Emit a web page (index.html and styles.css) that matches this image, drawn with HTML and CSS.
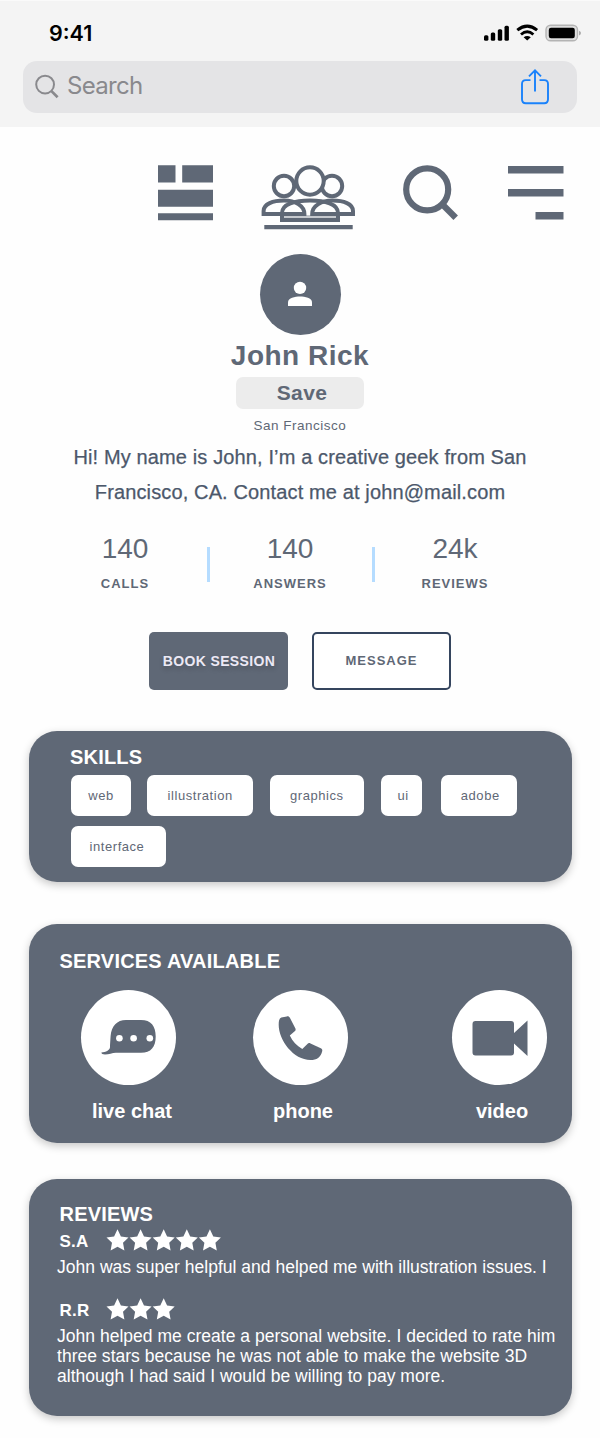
FILE: index.html
```html
<!DOCTYPE html>
<html lang="en">
<head>
<meta charset="utf-8">
<title>John Rick</title>
<link rel="stylesheet" href="styles.css">
</head>
<body>
<svg class="defs" width="0" height="0"><defs>
  <path id="star" d="M11.5 0.3 L14.9 7.4 L22.5 8.4 L17 13.7 L18.4 21.4 L11.5 17.7 L4.6 21.4 L6 13.7 L0.5 8.4 L8.1 7.4 Z"/>
</defs></svg>
<header class="top">
  <div class="status">
    <span class="time">9:41</span>
    <svg class="signals" width="98" height="20" viewBox="0 0 98 20">
      <rect x="1" y="12.2" width="4.4" height="5.6" rx="1.5"/><rect x="7.8" y="9.5" width="4.4" height="8.3" rx="1.5"/><rect x="14.8" y="6.2" width="4.4" height="11.6" rx="1.5"/><rect x="21.5" y="2.7" width="4.4" height="15.1" rx="1.5"/>
      <g fill="none" stroke="#000"><path d="M34.3 7.2 Q44.2 -1 54.1 7.2" stroke-width="3"/><path d="M38 11.5 Q44.2 6.2 50.4 11.5" stroke-width="2.9"/></g>
      <path d="M40.6 14.2 Q44.2 11.6 47.8 14.2 L44.2 17.6Z"/>
      <rect x="63" y="2.2" width="31.5" height="15.6" rx="4.6" fill="#dedede" stroke="#b4b4b4" stroke-width="1.4"/>
      <rect x="65.8" y="4.8" width="26" height="10.4" rx="2.2"/>
      <path d="M96 7.7 Q98 8.5 98 10.1 Q98 11.7 96 12.4Z" fill="#aaa"/>
    </svg>
  </div>
  <div class="search">
    <svg width="25" height="26" viewBox="0 0 25 26" fill="none" stroke="#89898d"><circle cx="10.1" cy="10.6" r="8.9" stroke-width="2"/><path d="M16.5 17.1 L22.6 23.2" stroke-width="2.7"/></svg>
    <span class="placeholder">Search</span>
    <svg class="share" width="30" height="38" viewBox="0 0 30 38" fill="none" stroke="#1a82fb" stroke-width="1.9"><path d="M10.5 12.1H5.8Q2 12.1 2 15.9V31.2Q2 35.2 5.8 35.2H24.2Q28 35.2 28 31.2V15.9Q28 12.1 24.2 12.1H19.5"/><path d="M15 23.5V2.5M9 8.4L15 2.4L21 8.4"/></svg>
  </div>
</header>

<nav class="nav">
  <svg width="56" height="56" viewBox="0 0 56 56"><path d="M0 .3H17.5V17.5H0ZM24.2 .3H55V17.5H24.2ZM0 24.8H55V41.7H0ZM0 48.3H55V55.2H0Z"/></svg>
  <svg class="people" width="95" height="66" viewBox="0 0 95 66">
    <path d="M21 50H77V55H21Z" opacity=".35"/>
    <g fill="none" stroke="#5f6876" stroke-width="4">
      <circle cx="23" cy="21" r="10.2"/><circle cx="71" cy="21" r="10.2"/>
      <circle cx="49" cy="16" r="13.7" fill="#fefefe"/>
      <path d="M2.6 49V46C2.6 39 12 35.6 23 35.6C34 35.6 43.4 40.5 43.4 49Z"/>
      <path d="M91.4 49V46C91.4 39 82 35.6 71 35.6C60 35.6 50.6 40.5 50.6 49Z" transform="translate(.6)"/>
      <path d="M21 55V48C21 39 34 35.4 49 35.4S77 39 77 48V55Z"/>
    </g>
    <path d="M3.3 60H91.7V64.2H3.3Z"/>
  </svg>
  <svg class="lens" width="56" height="56" viewBox="0 0 56 56" fill="none" stroke="#5f6876"><circle cx="24.2" cy="24.4" r="21" stroke-width="6.2"/><path d="M38.5 38.6L52.7 52.8" stroke-width="6.3"/></svg>
  <svg class="menu" width="56" height="56" viewBox="0 0 56 56"><path d="M0 1H55.5V8.5H0ZM0 24H55.5V31.5H0ZM27.5 47H55.5V54.5H27.5Z"/></svg>
</nav>

<section class="profile">
  <div class="avatar"><svg width="26" height="26" viewBox="0 0 26 26" fill="#fff"><circle cx="13" cy="6.9" r="6.2"/><path d="M1 25V21.2C1 16.8 8 15.4 13 15.4S25 16.8 25 21.2V25Z"/></svg></div>
  <h1 class="name">John Rick</h1>
  <button class="save">Save</button>
  <p class="city">San Francisco</p>
  <p class="bio">Hi! My name is John, I’m a creative geek from San<br>Francisco, CA. Contact me at john@mail.com</p>
</section>

<section class="stats">
  <div class="stat"><span class="num">140</span><span class="label">CALLS</span></div>
  <i class="rule"></i>
  <div class="stat"><span class="num">140</span><span class="label">ANSWERS</span></div>
  <i class="rule"></i>
  <div class="stat"><span class="num">24k</span><span class="label">REVIEWS</span></div>
</section>

<div class="actions">
  <button class="btn book">BOOK SESSION</button>
  <button class="btn message">MESSAGE</button>
</div>

<section class="card skills">
  <h2 class="title">SKILLS</h2>
  <div class="chips">
    <span class="chip web">web</span><span class="chip illustration">illustration</span><span class="chip graphics">graphics</span><span class="chip ui">ui</span><span class="chip adobe">adobe</span><span class="chip interface">interface</span>
  </div>
</section>

<section class="card services">
  <h2 class="title">SERVICES AVAILABLE</h2>
  <div class="options">
    <div class="option chat"><span class="disc"><svg width="95" height="95" viewBox="0 0 95 95"><path d="M29 55.5L29.6 46C30.5 36 36 30 45 30H60C70 30 74.7 36 74.7 46.5C74.7 57 70 62.8 60 62.8H35C31 63 28 64.6 24 64.6C21.8 64.6 20.2 63.8 20.4 62.6C24.5 62 29.8 60.5 29 55.5Z"/><g fill="#fff"><circle cx="38.4" cy="48.3" r="3.3"/><circle cx="52.6" cy="48.3" r="3.3"/><circle cx="68.8" cy="48.3" r="3.3"/></g></svg></span><span class="caption">live chat</span></div>
    <div class="option phone"><span class="disc"><svg width="95" height="95" viewBox="0 0 95 95"><path d="M28.3 27.4L33.8 26.4C35.3 26.1 36.3 26.7 37 28L42.3 38.2C42.9 39.4 42.7 40.4 41.7 41.3L36.8 45.6C39.7 51.7 43.5 55.9 49.3 59L54.4 53.9C55.3 53 56.3 52.9 57.5 53.4L67.8 58.2C69 58.8 69.6 59.9 69.2 61.2C67.6 67.5 63.8 70 57.5 70C40.5 70 25.7 50 25.7 35C25.7 31 26 28.3 28.3 27.4Z"/></svg></span><span class="caption">phone</span></div>
    <div class="option video"><span class="disc"><svg width="95" height="95" viewBox="0 0 95 95"><path d="M23.5 31H59Q62 31 62 34V43L75.5 30.5V66L62 53.5V62.5Q62 65.5 59 65.5H23.5Q20.5 65.5 20.5 62.5V34Q20.5 31 23.5 31Z"/></svg></span><span class="caption">video</span></div>
  </div>
</section>

<section class="card reviews">
  <h2 class="title">REVIEWS</h2>
  <div class="rater"><b class="initials">S.A</b><svg width="116" height="23" viewBox="0 0 116 23" fill="#fff"><use href="#star"/><use href="#star" x="23.1"/><use href="#star" x="46.2"/><use href="#star" x="69.3"/><use href="#star" x="92.4"/></svg></div>
  <p class="text first">John was super helpful and helped me with illustration issues. I</p>
  <div class="rater second"><b class="initials">R.R</b><svg width="116" height="23" viewBox="0 0 116 23" fill="#fff"><use href="#star"/><use href="#star" x="23.1"/><use href="#star" x="46.2"/></svg></div>
  <p class="text">John helped me create a personal website. I decided to rate him<br>three stars because he was not able to make the website 3D<br>although I had said I would be willing to pay more.</p>
</section>
</body>
</html>
```
FILE: styles.css
```css
* { box-sizing: border-box; margin: 0; padding: 0; }
body { width: 600px; height: 1438px; overflow: hidden; background: #fefefe; font-family: "Liberation Sans", Arial, sans-serif; color: #5f6876; }
svg { display: block; flex: none; }
button { font-family: inherit; border: 0; color: inherit; }
.defs { position: absolute; }
.top { height: 127px; background: #f4f4f4; border-top: 1px solid #fafafa; }
.status { height: 60px; padding: 22px 20px 0 49px; display: flex; justify-content: space-between; }
.time { font: 600 21.5px/20px Inter, sans-serif; color: #000; }
.signals { margin: 0 -1px 0 0; }
.search { margin: 0 23px; height: 52px; border-radius: 14px; background: #e4e4e6; display: flex; align-items: center; padding: 0 27px 0 12px; }
.placeholder { font: 400 24px/50px Inter, sans-serif; letter-spacing: -.7px; color: #89898d; margin-left: 7px; flex: 1; height: 52px; }
.nav { height: 126px; padding: 38px 0 0 158px; display: flex; align-items: flex-start; fill: #5f6876; }
.people { margin-left: 47px; }
.lens { margin-left: 47px; }
.menu { margin-left: 49px; }
.profile { display: flex; flex-direction: column; align-items: center; text-align: center; }
.avatar { width: 81px; height: 81px; border-radius: 50%; background: #5f6876; display: flex; align-items: center; justify-content: center; margin-top: .5px; }
.name { font-size: 28px; line-height: 42px; letter-spacing: .5px; }
.save { width: 128px; height: 32px; background: #ececec; border-radius: 7px; font-weight: bold; font-size: 21px; line-height: 32px; letter-spacing: .4px; padding-left: 4px; }
.city { font-size: 13.5px; line-height: 34px; height: 31px; letter-spacing: .5px; }
.bio { font-size: 20px; line-height: 35px; letter-spacing: .13px; color: #4c586b; -webkit-text-stroke: .25px #4c586b; }
.stats { margin: 19px 0 0 44px; width: 495px; height: 76px; display: flex; align-items: flex-start; }
.stat { width: 165px; margin: 0 -1.5px; display: flex; flex-direction: column; align-items: center; }
.num { font-size: 28px; line-height: 40px; }
.label { font-weight: bold; font-size: 13px; line-height: 30px; letter-spacing: 1px; }
.rule { width: 3px; height: 35px; background: #b5dcff; margin: 18.5px -1px 0 1px; flex: none; }
.actions { display: flex; gap: 24px; margin: 27px 0 0 149px; }
.btn { width: 139px; height: 58px; border-radius: 5px; font-weight: bold; }
.book { background: #5f6876; color: #ece9f5; font-size: 14px; letter-spacing: .35px; text-shadow: 0 3px 5px rgba(0,0,0,.2); padding-left: 1px; }
.message { background: #fff; border: 2px solid #35455e; font-size: 13px; letter-spacing: 1px; padding-bottom: 1px; }
.card { width: 543px; margin-left: 29px; border-radius: 28px; background: #5f6876; box-shadow: 0 3px 8px rgba(0,0,0,.22); color: #fff; }
.title { font-size: 20px; line-height: 28px; letter-spacing: .2px; }
.skills { margin-top: 41px; height: 151.5px; padding: 12px 0 0 41px; }
.chips { display: flex; flex-wrap: wrap; column-gap: 16.7px; row-gap: 10px; margin: 4.5px 20px 0 .5px; }
.chip { height: 41px; border-radius: 7px; background: #fff; color: #5f6876; font-size: 13px; line-height: 41px; letter-spacing: .55px; text-align: center; }
.web { width: 60px; padding-left: 1px; } .illustration { width: 106px; } .graphics { width: 94px; } .ui { width: 41px; padding-left: 4px; } .adobe { width: 76px; margin-left: 3px; padding-left: 2px; } .interface { width: 95px; padding-right: 2px; }
.services { margin-top: 41.5px; height: 219px; padding: 23px 0 0 30px; }
.services .title { padding-left: .5px; }
.options { display: flex; margin-top: 15px; }
.option { width: 95px; display: flex; flex-direction: column; align-items: center; }
.chat { margin-left: 22px; } .phone { margin-left: 77px; } .video { margin-left: 104px; }
.disc { width: 95px; height: 95px; border-radius: 50%; background: #fff; fill: #5f6876; }
.caption { font-weight: bold; font-size: 20px; line-height: 28px; margin-top: 12px; padding-left: 7px; white-space: nowrap; }
.phone .caption { padding-left: 5px; }
.video .caption { padding-left: 5px; }
.reviews { margin-top: 36px; height: 237px; padding: 21px 0 0 28px; }
.reviews .title { padding-left: 2.5px; height: 28px; }
.rater { display: flex; align-items: center; height: 29px; padding-left: 2px; }
.rater svg { margin-top: -3px; }
.initials { width: 47px; padding-left: .5px; font-size: 17px; line-height: 28px; letter-spacing: .2px; }
.second { margin-top: 20px; }
.text { font-size: 17.5px; line-height: 20.4px; letter-spacing: .02px; white-space: nowrap; }
.first { height: 20px; line-height: 20px; }
```
